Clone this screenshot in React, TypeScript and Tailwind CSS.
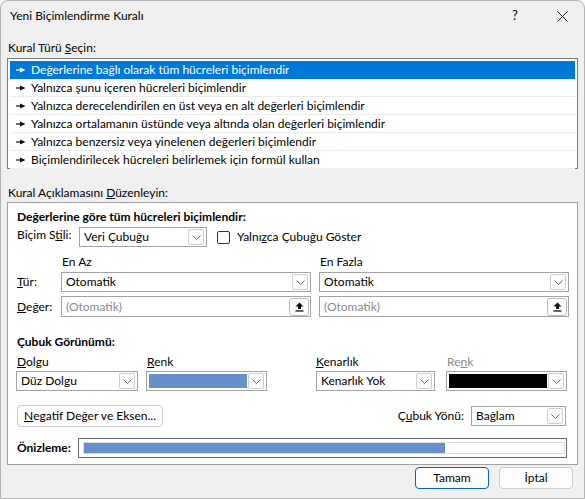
import React from 'react';

const font = { fontFamily: 'Lato, "Noto Sans", sans-serif' };

function Chevron({ color = '#6b6b6b' }: { color?: string }) {
  return (
    <svg width="9" height="5" viewBox="0 0 9 5" fill="none">
      <path d="M0.5 0.5 L4.5 4.5 L8.5 0.5" stroke={color} strokeWidth="1" />
    </svg>
  );
}

function DropBtn() {
  return (
    <div className="mr-[2px] flex h-[16px] w-[16px] shrink-0 items-center justify-center rounded-[2px] border border-[#cfcfcf] bg-[#fbfbfb]">
      <Chevron />
    </div>
  );
}

function Combo({ className, children }: { className: string; children?: React.ReactNode }) {
  return (
    <div className={`flex h-[20px] shrink-0 items-center border border-[#a3a3a3] bg-white ${className}`}>
      <div className="flex-1 truncate pl-[4px] leading-[18px]">{children}</div>
      <DropBtn />
    </div>
  );
}

function ColorCombo({ className, color }: { className: string; color: string }) {
  return (
    <div className={`flex h-[20px] shrink-0 items-center border border-[#a3a3a3] bg-white ${className}`}>
      <div className={`ml-[2px] mr-[1px] h-[14px] flex-1 ${color}`} />
      <DropBtn />
    </div>
  );
}

function RefIcon() {
  return (
    <svg width="9" height="10" viewBox="0 0 9 10">
      <path d="M4.5 0.5 L8.5 4.5 L6 4.5 L6 7 L3 7 L3 4.5 L0.5 4.5 Z" fill="#111" />
      <rect x="0.5" y="8.3" width="8" height="1.3" fill="#111" />
    </svg>
  );
}

function RefInput({ className }: { className: string }) {
  return (
    <div className={`flex h-[21px] shrink-0 items-center border border-[#a3a3a3] bg-white ${className}`}>
      <div className="flex-1 pl-[4px] text-[#8a8a8a]">(Otomatik)</div>
      <div className="mr-[1px] flex h-[18px] w-[20px] items-center justify-center rounded-[3px] border border-[#bdbdbd] bg-[#fdfdfd]">
        <RefIcon />
      </div>
    </div>
  );
}

function Arrow({ white }: { white?: boolean }) {
  const c = white ? '#fff' : '#111';
  return (
    <svg width="10" height="6" viewBox="0 0 10 6" className="mr-[5px] shrink-0">
      <rect x="0" y="2.4" width="5" height="1.2" fill={c} />
      <path d="M4 0.5 L9.5 3 L4 5.5 Z" fill={c} />
    </svg>
  );
}

const rules = [
  'Değerlerine bağlı olarak tüm hücreleri biçimlendir',
  'Yalnızca şunu içeren hücreleri biçimlendir',
  'Yalnızca derecelendirilen en üst veya en alt değerleri biçimlendir',
  'Yalnızca ortalamanın üstünde veya altında olan değerleri biçimlendir',
  'Yalnızca benzersiz veya yinelenen değerleri biçimlendir',
  'Biçimlendirilecek hücreleri belirlemek için formül kullan',
];

export default function App() {
  return (
    <div className="h-[499px] w-[585px] bg-[#fafafa] text-[12px] text-black" style={font}>
      <div className="flex h-[499px] w-[585px] flex-col rounded-t-[8px] border border-[#b4b4b4] bg-[#f0f0f0]">
        {/* title bar */}
        <div className="flex h-[30px] items-center pl-[9px]">
          <span className="flex-1">Yeni Biçimlendirme Kuralı</span>
          <span className="w-[12px] text-[13px]">?</span>
          <svg width="11" height="11" viewBox="0 0 11 11" className="ml-[33px] mr-[16px]">
            <path d="M0.5 0.5 L10.5 10.5 M10.5 0.5 L0.5 10.5" stroke="#222" strokeWidth="1" />
          </svg>
        </div>

        <div className="px-[6px]">
          <div className="mt-[9px] h-[16px] pl-[1px] leading-[16px]">
            Kural Türü <span className="underline">S</span>eçin:
          </div>
          {/* listbox */}
          <div className="mt-[2px] h-[111px] border border-[#7a7a7a] bg-white p-[2px]">
            {rules.map((r, i) => (
              <div
                key={r}
                className={`flex h-[18px] items-center border-b pl-[6px] ${
                  i === 0 ? 'border-[#0078d7] bg-[#0078d7] text-white' : 'border-[#ececec]'
                }`}
              >
                <Arrow white={i === 0} />
                <span className="truncate">{r}</span>
              </div>
            ))}
          </div>

          <div className="mt-[16px] h-[16px] pl-[1px] leading-[16px]">
            Kural Açıklamasını <span className="underline">D</span>üzenleyin:
          </div>

          {/* description panel */}
          <div className="mt-[1px] h-[263px] border border-[#a0a0a0] bg-white pl-[9px]">
            <div className="mt-[6px] h-[16px] font-bold leading-[16px]">
              Değerlerine göre tüm hücreleri biçimlendir:
            </div>
            <div className="mt-[2px] flex h-[20px] items-center">
              <div className="w-[62px] self-start leading-[16px]">
                Biçim S<span className="underline">t</span>ili:
              </div>
              <Combo className="w-[128px]">Veri Çubuğu</Combo>
              <div className="ml-[10px] h-[13px] w-[13px] rounded-[2px] border border-[#333]" />
              <span className="ml-[7px]">
                Yalnı<span className="underline">z</span>ca Çubuğu Göster
              </span>
            </div>

            <div className="mt-[8px] flex h-[14px] items-center leading-[14px]">
              <span className="ml-[45px] w-[258px]">En Az</span>
              <span>En Fazla</span>
            </div>
            <div className="mt-[3px] flex h-[20px] items-center">
              <span className="w-[44px]">
                <span className="underline">T</span>ür:
              </span>
              <Combo className="w-[250px]">Otomatik</Combo>
              <div className="w-[8px]" />
              <Combo className="w-[250px]">Otomatik</Combo>
            </div>
            <div className="mt-[4px] flex h-[21px] items-center">
              <span className="w-[44px]">
                <span className="underline">D</span>eğer:
              </span>
              <RefInput className="w-[250px]" />
              <div className="w-[8px]" />
              <RefInput className="w-[250px]" />
            </div>

            <div className="mt-[17px] h-[16px] font-bold leading-[16px]">Çubuk Görünümü:</div>
            <div className="mt-[5px] flex h-[14px] items-center leading-[14px]">
              <span className="w-[130px]">
                <span className="underline">D</span>olgu
              </span>
              <span className="w-[169px]">
                <span className="underline">R</span>enk
              </span>
              <span className="w-[131px]">
                <span className="underline">K</span>enarlık
              </span>
              <span className="text-[#8a8a8a]">
                Re<span className="underline">n</span>k
              </span>
            </div>
            <div className="-ml-[1px] mt-[2px] flex h-[20px] items-center">
              <Combo className="w-[122px]">Düz Dolgu</Combo>
              <div className="w-[8px]" />
              <ColorCombo className="w-[121px]" color="bg-[#6590c8]" />
              <div className="w-[49px]" />
              <Combo className="w-[119px]">Kenarlık Yok</Combo>
              <div className="w-[11px]" />
              <ColorCombo className="w-[121px]" color="bg-black" />
            </div>

            <div className="mt-[14px] flex h-[22px] items-center">
              <button className="flex h-[22px] w-[146px] items-center justify-center rounded-[4px] border border-[#cccccc] bg-[#fdfdfd]">
                <span className="underline">N</span>egatif Değer ve Eksen...
              </button>
              <span className="ml-auto mr-[7px]">
                Ç<span className="underline">u</span>buk Yönü:
              </span>
              <Combo className="mr-[11px] w-[95px]">Bağlam</Combo>
            </div>

            <div className="mt-[10px] flex h-[21px] items-center">
              <span className="w-[61px] font-bold">Önizleme:</span>
              <div className="flex h-[20px] w-[489px] items-center border border-[#6a6a6a] bg-white pl-[4px] pr-[1px]">
                <div className="flex h-[12px] flex-1 border border-[#dcdcdc]">
                  <div className="h-full w-[361px] bg-[#6590c8]" />
                </div>
              </div>
            </div>
          </div>

          {/* footer */}
          <div className="mt-[2px] flex h-[22px] justify-end">
            <button className="h-[22px] w-[74px] rounded-[4px] border border-[#0067c0] bg-[#fdfdfd]">Tamam</button>
            <button className="ml-[10px] mr-[5px] h-[22px] w-[74px] rounded-[4px] border border-[#cccccc] bg-[#fdfdfd]">
              İptal
            </button>
          </div>
        </div>
      </div>
    </div>
  );
}
